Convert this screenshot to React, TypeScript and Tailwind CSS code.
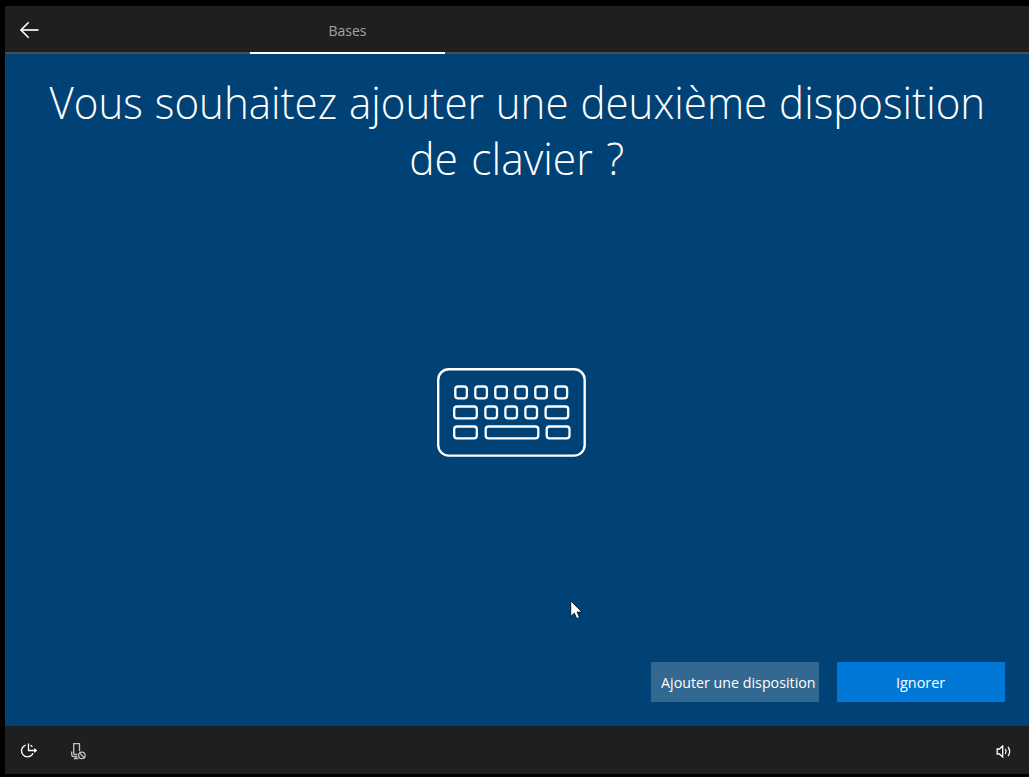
import React from "react";

const FONT = "font-['Open_Sans','Noto_Sans',sans-serif]";

type Key = [x: number, y: number, width: number];

const KEYS: Key[] = [
  [18.3, 18.5, 11.6], [38.3, 18.5, 11.6], [58.3, 18.5, 11.6],
  [78.3, 18.5, 11.6], [98.3, 18.5, 11.6], [118.5, 18.5, 11.6],
  [17.2, 38.5, 22.6], [48.4, 38.5, 11.6], [68.4, 38.5, 11.6],
  [88.4, 38.5, 11.6], [108.6, 38.5, 22.6],
  [17.2, 58.5, 22.6], [48.7, 58.5, 52.6], [109.7, 58.5, 22.8],
];

function BackArrow() {
  return (
    <svg width="20" height="18" viewBox="0 0 20 18" fill="none">
      <path d="M2 9H19.5" stroke="#ddd8d8" strokeWidth="2" />
      <path d="M9.7 1.2L2 9L9.7 16.8" stroke="#fff" strokeWidth="1.6" />
    </svg>
  );
}

function Keyboard() {
  return (
    <svg width="150" height="90" viewBox="0 0 150 90" fill="none" stroke="#fff" strokeWidth="2.4">
      <rect x="2.2" y="1.3" width="146.5" height="86.3" rx="10.5" />
      {KEYS.map(([x, y, w]) => (
        <rect key={`${x}-${y}`} x={x + 1} y={y} width={w} height="11.8" rx="2.8" strokeWidth="2.3" />
      ))}
    </svg>
  );
}

function EaseOfAccess() {
  return (
    <svg width="17" height="16" viewBox="0 0 17 16" fill="none" stroke="#fff" strokeWidth="1.3">
      <path d="M5.6 2.1A6 6 0 1 0 13 10.2" />
      <path d="M8.5 .5V7.5H16M14.2 5.7L16.2 7.5L14.2 9.3" />
      <path d="M10.6 2.3L12.4 3.8" />
    </svg>
  );
}

function MicrophoneOff() {
  return (
    <svg width="15" height="17" viewBox="0 0 15 17" fill="none" stroke="#c5bfc7" strokeWidth="1.3">
      <path d="M2.7 11.3V.7H8.5V8.3M2.7 11.3H6.5" />
      <path d="M.7 8.5V11.5Q.7 13.4 2.7 13.4H6.4M5 13.4V15.5M2.8 15.5H7.2" />
      <circle cx="10.9" cy="12.4" r="3.2" />
      <path d="M8.6 10.1L13.2 14.7" />
    </svg>
  );
}

function Speaker() {
  return (
    <svg width="15" height="13" viewBox="0 0 15 13" fill="none" stroke="#fff" strokeWidth="1.3">
      <path d="M1.2 4H3.4L6.7 1V12L3.4 9H1.2Z" />
      <path d="M9.4 4.2Q10.8 6.5 9.4 8.8" />
      <path d="M12 1.8Q15.4 6.5 12 11.2" />
    </svg>
  );
}

function Pointer() {
  return (
    <svg className="absolute left-[570px] top-[600px]" width="14" height="21" viewBox="0 0 14 21">
      <path d="M.7 .8V16.6L4.3 13.2L6.7 18.7L9.5 17.5L7.2 12.1H12Z" fill="#fff" stroke="#00152a" strokeWidth="1" />
    </svg>
  );
}

export default function App() {
  return (
    <div className={`relative flex h-[777px] w-[1029px] flex-col overflow-hidden bg-black pt-[6px] pb-[3px] pl-[5px] text-white ${FONT}`}>
      <header className="flex h-12 shrink-0 border-b-2 border-[#4c4c4c] bg-[#1f1f1f]">
        <button className="flex w-[245px] items-center pt-[2px] pl-[14px]" aria-label="Retour">
          <BackArrow />
        </button>
        <div className="flex h-12 w-[195px] items-center justify-center border-b-2 border-white pt-[3px] text-[14px] text-[#a5a5a5]">
          <span className="inline-block">Bases</span>
        </div>
      </header>

      <main className="flex h-[672px] shrink-0 flex-col bg-[#004275]">
        <h1 className="flex h-[314px] flex-col items-center pt-[20px] text-[45px] leading-[56px] font-light whitespace-nowrap">
          <span className="scale-x-[0.935] [word-spacing:1px]">Vous souhaitez ajouter une deuxième disposition</span>
          <span className="scale-x-[0.945] [word-spacing:2.5px]">de clavier ?</span>
        </h1>
        <div className="flex pl-[431px]">
          <Keyboard />
        </div>
        <div className="mt-auto flex justify-end gap-[18px] pr-6 pb-6 text-[15px]">
          <button className="flex h-10 w-[168px] items-center justify-center bg-[#336890] pt-px pl-[6px] whitespace-nowrap">
            <span className="scale-x-[0.95]">Ajouter une disposition</span>
          </button>
          <button className="flex h-10 w-[168px] items-center justify-center bg-[#0078d7] pt-px">
            <span className="scale-x-[0.96]">Ignorer</span>
          </button>
        </div>
      </main>

      <footer className="flex h-12 shrink-0 items-center bg-[#1f1f1f] pt-[2px] pr-[18px] pl-[15px]">
        <EaseOfAccess />
        <div className="ml-[34px]">
          <MicrophoneOff />
        </div>
        <div className="ml-auto">
          <Speaker />
        </div>
      </footer>
      <Pointer />
    </div>
  );
}
